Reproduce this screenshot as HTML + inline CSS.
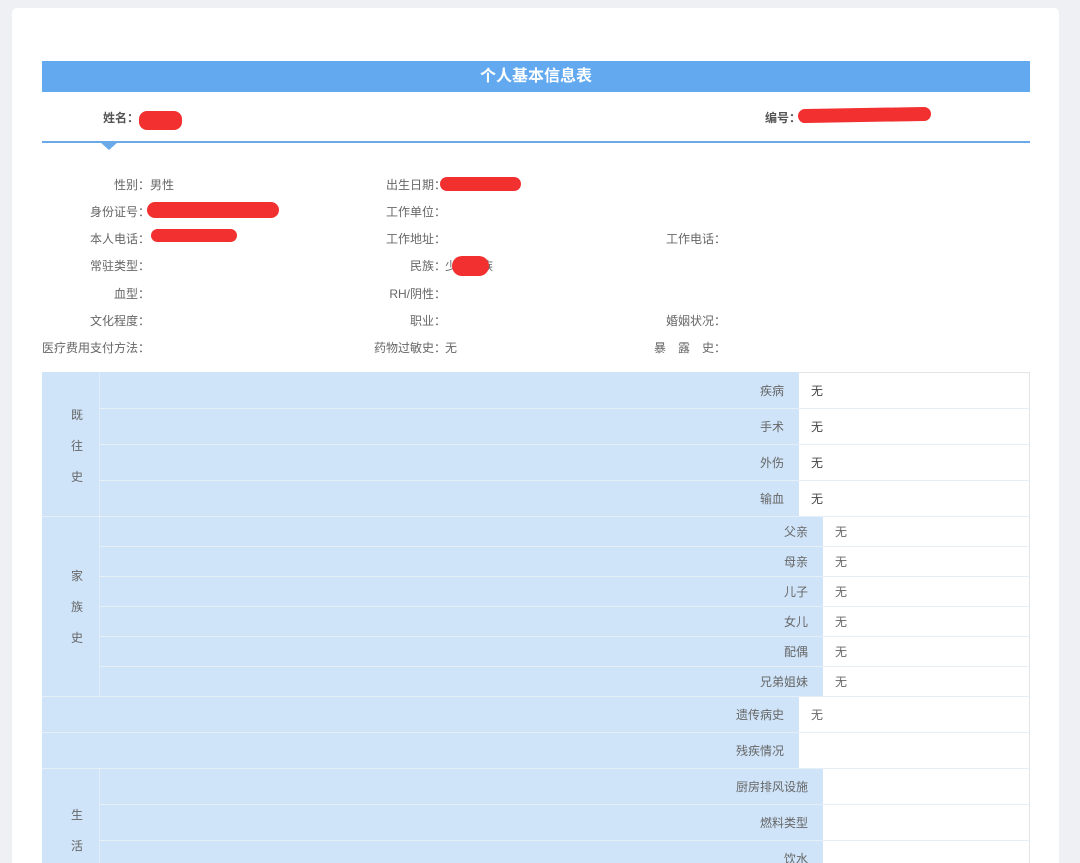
<!DOCTYPE html>
<html><head><meta charset="utf-8"><style>
html,body{margin:0;width:1080px;height:863px;overflow:hidden}
body{background:#eef0f3;font-family:"Liberation Sans","Noto Sans CJK SC",sans-serif;font-size:12px;color:#666;position:relative}
.card{position:absolute;left:12px;top:8px;width:1047px;height:900px;background:#fff;border-radius:5px}
.a{position:absolute;white-space:nowrap}
.r{position:absolute;white-space:nowrap;text-align:right}
.red{position:absolute;background:#f23030;border-radius:8px}
.blue{position:absolute;background:#cfe4f9}
.hl{position:absolute;height:1px;background:#e6eef6}
</style></head><body>
<div class="card"></div>
<div class="a" style="left:42px;top:61px;width:988px;height:31px;background:#62a9f0;color:#fff;font-weight:bold;font-size:16px;text-align:center;line-height:31px">个人基本信息表</div>
<div class="a" style="left:103px;top:109px;color:#555;font-weight:bold">姓名：</div>
<div class="red" style="left:139px;top:111px;width:43px;height:19px"></div>
<div class="a" style="left:765px;top:109px;color:#555;font-weight:bold">编号：</div>
<div class="red" style="left:798px;top:108px;width:133px;height:14px;transform:rotate(-1deg)"></div>
<div class="a" style="left:42px;top:141px;width:988px;height:2px;background:#6aaae9"></div>
<div class="a" style="left:100px;top:142px;width:0;height:0;border-left:9px solid transparent;border-right:9px solid transparent;border-top:8px solid #6aaae9"></div>

<div class="r" style="right:930px;top:176px">性别：</div><div class="a" style="left:150px;top:176px">男性</div>
<div class="r" style="right:930px;top:203px">身份证号：</div><div class="red" style="left:147px;top:202px;width:132px;height:16px"></div>
<div class="r" style="right:930px;top:230px">本人电话：</div><div class="red" style="left:151px;top:229px;width:86px;height:13px"></div>
<div class="r" style="right:930px;top:257px">常驻类型：</div>
<div class="r" style="right:930px;top:285px">血型：</div>
<div class="r" style="right:930px;top:312px">文化程度：</div>
<div class="r" style="right:930px;top:339px">医疗费用支付方法：</div>

<div class="r" style="right:634px;top:176px">出生日期：</div><div class="red" style="left:440px;top:177px;width:81px;height:14px"></div>
<div class="r" style="right:634px;top:203px">工作单位：</div>
<div class="r" style="right:634px;top:230px">工作地址：</div>
<div class="r" style="right:634px;top:257px">民族：</div><div class="a" style="left:445px;top:257px">少数民族</div><div class="red" style="left:452px;top:256px;width:37px;height:20px;border-radius:10px"></div>
<div class="r" style="right:634px;top:285px">RH/阴性：</div>
<div class="r" style="right:634px;top:312px">职业：</div>
<div class="r" style="right:634px;top:339px">药物过敏史：</div><div class="a" style="left:445px;top:339px">无</div>

<div class="r" style="right:354px;top:230px">工作电话：</div>
<div class="r" style="right:354px;top:312px">婚姻状况：</div>
<div class="r" style="right:354px;top:339px">暴　露　史：</div>

<div class="a" style="left:42px;top:372px;width:988px;height:500px;border:1px solid #e4e4e4;box-sizing:border-box"></div>
<div class="blue" style="left:42px;top:372px;width:757px;height:144px"></div>
<div class="blue" style="left:42px;top:516px;width:781px;height:180px"></div>
<div class="blue" style="left:42px;top:696px;width:757px;height:72px"></div>
<div class="blue" style="left:42px;top:768px;width:781px;height:100px"></div>
<div class="a" style="left:99px;top:372px;width:1px;height:324px;background:#e0ecf8"></div>
<div class="a" style="left:99px;top:768px;width:1px;height:100px;background:#e0ecf8"></div>

<div class="a" style="left:71px;top:400px;line-height:31px;width:14px">既<br>往<br>史</div>
<div class="a" style="left:71px;top:561px;line-height:31px;width:14px">家<br>族<br>史</div>
<div class="a" style="left:71px;top:800px;line-height:31px;width:14px">生<br>活</div>

<div class="hl" style="left:99px;top:408px;width:931px"></div>
<div class="hl" style="left:99px;top:444px;width:931px"></div>
<div class="hl" style="left:99px;top:480px;width:931px"></div>
<div class="hl" style="left:42px;top:516px;width:988px"></div>
<div class="hl" style="left:99px;top:546px;width:931px"></div>
<div class="hl" style="left:99px;top:576px;width:931px"></div>
<div class="hl" style="left:99px;top:606px;width:931px"></div>
<div class="hl" style="left:99px;top:636px;width:931px"></div>
<div class="hl" style="left:99px;top:666px;width:931px"></div>
<div class="hl" style="left:42px;top:696px;width:988px"></div>
<div class="hl" style="left:42px;top:732px;width:988px"></div>
<div class="hl" style="left:42px;top:768px;width:988px"></div>
<div class="hl" style="left:99px;top:804px;width:931px"></div>
<div class="hl" style="left:99px;top:840px;width:931px"></div>

<div class="r" style="right:296px;top:382px">疾病</div><div class="a" style="left:811px;top:382px;color:#444">无</div>
<div class="r" style="right:296px;top:418px">手术</div><div class="a" style="left:811px;top:418px;color:#444">无</div>
<div class="r" style="right:296px;top:454px">外伤</div><div class="a" style="left:811px;top:454px;color:#444">无</div>
<div class="r" style="right:296px;top:490px">输血</div><div class="a" style="left:811px;top:490px;color:#444">无</div>
<div class="r" style="right:272px;top:523px">父亲</div><div class="a" style="left:835px;top:523px">无</div>
<div class="r" style="right:272px;top:553px">母亲</div><div class="a" style="left:835px;top:553px">无</div>
<div class="r" style="right:272px;top:583px">儿子</div><div class="a" style="left:835px;top:583px">无</div>
<div class="r" style="right:272px;top:613px">女儿</div><div class="a" style="left:835px;top:613px">无</div>
<div class="r" style="right:272px;top:643px">配偶</div><div class="a" style="left:835px;top:643px">无</div>
<div class="r" style="right:272px;top:673px">兄弟姐妹</div><div class="a" style="left:835px;top:673px">无</div>
<div class="r" style="right:296px;top:706px">遗传病史</div><div class="a" style="left:811px;top:706px">无</div>
<div class="r" style="right:296px;top:742px">残疾情况</div>
<div class="r" style="right:272px;top:778px">厨房排风设施</div>
<div class="r" style="right:272px;top:814px">燃料类型</div>
<div class="r" style="right:272px;top:850px">饮水</div>
</body></html>
